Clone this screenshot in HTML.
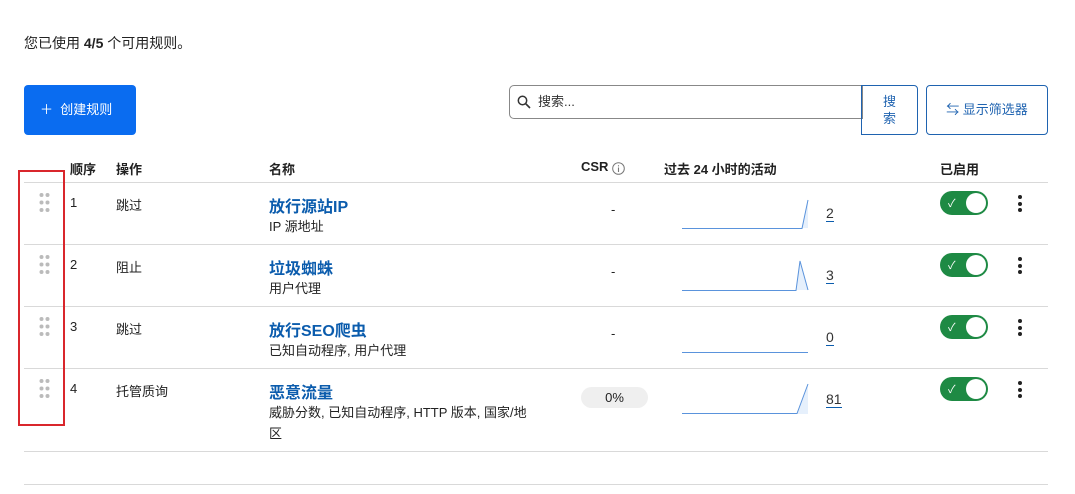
<!DOCTYPE html>
<html><head><meta charset="utf-8"><style>
*{box-sizing:border-box;margin:0;padding:0}
body{width:1075px;height:494px;background:#fff;font-family:"Liberation Sans","Noto Sans CJK SC",sans-serif;color:#222;font-size:13px;position:relative;overflow:hidden}
.a{position:absolute}
.hr{position:absolute;left:24px;width:1024px;height:1px;background:#d9d9d9}
.th{font-weight:bold;font-size:13px;top:159px}
.name{color:#0b5cad;font-weight:bold;font-size:16px}
.sub{font-size:13px;color:#222}
.tog{position:absolute;left:940px;width:48px;height:24px;border-radius:12px;background:#1e8a44;}
.tog:after{content:"";position:absolute;right:2px;top:2px;width:20px;height:20px;border-radius:50%;background:#fff}
.tog span{position:absolute;left:8px;top:4px;color:#fff;font-size:11px}
.keb{position:absolute;left:1018px;width:4px}
.keb i{display:block;width:4px;height:4px;border-radius:50%;background:#222;margin-bottom:2.5px}
.cnt{position:absolute;left:826px;font-size:14px;color:#333;border-bottom:1px solid #0b5cad;line-height:15px}
</style></head><body>
<div class="a" style="left:24px;top:33px;font-size:14px">您已使用 <b>4/5</b> 个可用规则。</div>
<div class="a" style="left:24px;top:85px;width:112px;height:50px;background:#0a6cf0;border-radius:4px;color:#fff;font-size:13px;line-height:50px;padding-left:16px">＋&nbsp; 创建规则</div>
<div class="a" style="left:509px;top:85px;width:354px;height:34px;border:1px solid #888;border-radius:5px 0 0 5px;font-size:13px;line-height:32px;padding-left:28px;color:#333">搜索...</div>
<svg class="a" style="left:517px;top:95px" width="14" height="14"><circle cx="5.5" cy="5.5" r="4.2" fill="none" stroke="#333" stroke-width="1.5"/><path d="M8.5 8.5 L13 13" stroke="#333" stroke-width="1.6"/></svg>
<div class="a" style="left:861px;top:85px;width:57px;height:50px;border:1px solid #1f63b0;border-radius:0 4px 4px 0;color:#1f63b0;text-align:center;font-size:13px;line-height:17px;padding-top:7px">搜<br>索</div>
<div class="a" style="left:926px;top:85px;width:122px;height:50px;border:1px solid #1f63b0;border-radius:4px;color:#1f63b0;font-size:13px;line-height:48px;text-align:center">⇆ 显示筛选器</div>
<div class="a th" style="left:70px">顺序</div>
<div class="a th" style="left:116px">操作</div>
<div class="a th" style="left:269px">名称</div>
<div class="a th" style="left:581px">CSR</div>
<svg class="a" style="left:612px;top:162px" width="13" height="13"><circle cx="6.5" cy="6.5" r="5.8" fill="none" stroke="#777" stroke-width="1"/><path d="M6.5 5.5V10M6.5 3.2V4.4" stroke="#777" stroke-width="1.1"/></svg>
<div class="a th" style="left:664px">过去 24 小时的活动</div>
<div class="a th" style="left:940px">已启用</div>
<div class="hr" style="top:182px"></div>
<div class="hr" style="top:244px"></div>
<div class="hr" style="top:306px"></div>
<div class="hr" style="top:368px"></div>
<div class="hr" style="top:451px"></div>
<div class="hr" style="top:484px"></div>
<div class="a" style="left:18px;top:170px;width:47px;height:256px;border:2px solid #d9262c"></div>

<svg class="a" style="left:0;top:0" width="1075" height="494">
<defs><g id="d" fill="#bbb"><circle cx="41.5" cy="195" r="2"/><circle cx="47.5" cy="195" r="2"/><circle cx="41.5" cy="202.5" r="2"/><circle cx="47.5" cy="202.5" r="2"/><circle cx="41.5" cy="210" r="2"/><circle cx="47.5" cy="210" r="2"/></g></defs>
<use href="#d"/><use href="#d" y="62"/><use href="#d" y="124"/><use href="#d" y="186"/>
<g fill="#e6f0fc" stroke="none">
<path d="M802 228 L808 200 L808 228Z"/><path d="M796 290 L800 261 L808 290Z"/><path d="M797 414 L808 384 L808 414Z"/></g>
<g fill="none" stroke="#5a93dc" stroke-width="1">
<path d="M682 228.5 H802 L808 200"/>
<path d="M682 290.5 H796 L800 261 L808 290"/>
<path d="M682 352.5 H808"/>
<path d="M682 413.5 H797 L808 384"/></g>
</svg>

<div class="a" style="left:70px;top:195px">1</div><div class="a" style="left:116px;top:195px">跳过</div>
<div class="a name" style="left:269px;top:193px">放行源站IP</div><div class="a sub" style="left:269px;top:216px">IP 源地址</div>
<div class="a" style="left:611px;top:202px">-</div>
<div class="cnt" style="top:206px">2</div>
<div class="tog" style="top:191px"><span>✓</span></div>
<div class="keb" style="top:195px"><i></i><i></i><i></i></div>

<div class="a" style="left:70px;top:257px">2</div><div class="a" style="left:116px;top:257px">阻止</div>
<div class="a name" style="left:269px;top:255px">垃圾蜘蛛</div><div class="a sub" style="left:269px;top:278px">用户代理</div>
<div class="a" style="left:611px;top:264px">-</div>
<div class="cnt" style="top:268px">3</div>
<div class="tog" style="top:253px"><span>✓</span></div>
<div class="keb" style="top:257px"><i></i><i></i><i></i></div>

<div class="a" style="left:70px;top:319px">3</div><div class="a" style="left:116px;top:319px">跳过</div>
<div class="a name" style="left:269px;top:317px">放行SEO爬虫</div><div class="a sub" style="left:269px;top:340px">已知自动程序, 用户代理</div>
<div class="a" style="left:611px;top:326px">-</div>
<div class="cnt" style="top:330px">0</div>
<div class="tog" style="top:315px"><span>✓</span></div>
<div class="keb" style="top:319px"><i></i><i></i><i></i></div>

<div class="a" style="left:70px;top:381px">4</div><div class="a" style="left:116px;top:381px">托管质询</div>
<div class="a name" style="left:269px;top:379px">恶意流量</div><div class="a sub" style="left:269px;top:402px;line-height:21px;width:300px">威胁分数, 已知自动程序, HTTP 版本, 国家/地<br>区</div>
<div class="a" style="left:581px;top:387px;width:67px;height:21px;border-radius:11px;background:#efefef;text-align:center;line-height:21px;font-size:13px">0%</div>
<div class="cnt" style="top:392px">81</div>
<div class="tog" style="top:377px"><span>✓</span></div>
<div class="keb" style="top:381px"><i></i><i></i><i></i></div>
</body></html>
